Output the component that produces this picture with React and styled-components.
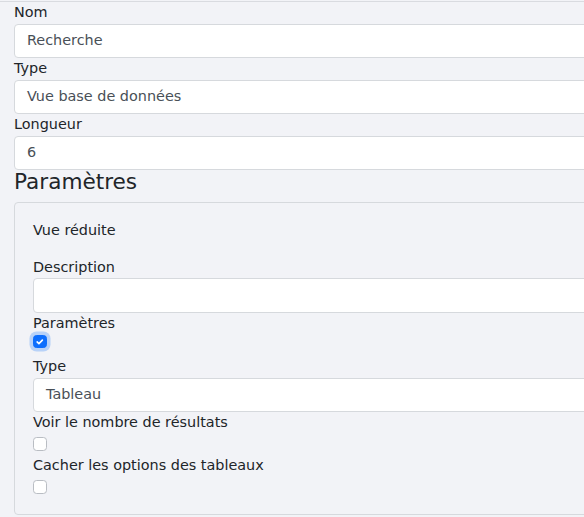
import React from 'react';
import styled, { createGlobalStyle } from 'styled-components';

const GlobalStyle = createGlobalStyle`
  html, body {
    margin: 0;
    padding: 0;
    background: #f2f3f7;
    overflow: hidden;
  }
  body {
    font-family: "DejaVu Sans", "Liberation Sans", sans-serif;
    font-size: 14.4px;
    line-height: 1.5;
    color: #212529;
  }
`;

const Page = styled.div`
  padding-top: 1px;
`;

const Form = styled.div`
  border-top: 1px solid #d9dbe0;
  padding-left: 14px;
  width: 700px;
`;

const Label = styled.div`
  line-height: 21.6px;
  color: #212529;
`;

const Input = styled.div`
  box-sizing: border-box;
  height: 34.4px;
  padding: 0 12px;
  display: flex;
  align-items: center;
  background: #fff;
  border: 1px solid #d6d9dd;
  border-radius: 4px;
  color: #495057;
`;

const Heading = styled.h4`
  margin: 0 0 8.5px;
  font-size: 21.6px;
  font-weight: 400;
  line-height: 1.1;
  color: #212529;
`;

const Panel = styled.div`
  border: 1px solid #d6d9dd;
  border-radius: 4px;
  padding: 16.5px 18px 16px;
`;

const Text = styled.div`
  line-height: 21.6px;
  margin-bottom: 15.5px;
`;

const CheckWrap = styled.div`
  box-sizing: border-box;
  height: 21.6px;
  padding-top: ${(p) => p.$top}px;
`;

const Box = styled.span`
  box-sizing: border-box;
  display: block;
  width: 13.5px;
  height: 13.5px;
  border-radius: 3.6px;
  background: ${(p) => (p.$checked ? '#0d6efd' : '#fff')};
  border: 1px solid ${(p) => (p.$checked ? '#0d6efd' : '#b9bdc3')};
  box-shadow: ${(p) => (p.$checked ? '0 0 0 3.5px rgba(13, 110, 253, 0.25)' : 'none')};
  svg {
    display: block;
  }
`;

const Checkbox = ({ checked, top }) => (
  <CheckWrap $top={top}>
    <Box $checked={checked}>
      {checked && (
        <svg width="11.5" height="11.5" viewBox="0 0 11 11">
          <path d="M3 5.7 L4.7 7.3 L8 4" fill="none" stroke="#fff" strokeWidth="1.6" strokeLinecap="round" strokeLinejoin="round" />
        </svg>
      )}
    </Box>
  </CheckWrap>
);

export default function App() {
  return (
    <Page>
      <GlobalStyle />
      <Form>
        <Label>Nom</Label>
        <Input>Recherche</Input>
        <Label>Type</Label>
        <Input>Vue base de données</Input>
        <Label>Longueur</Label>
        <Input>6</Input>
        <Heading>Paramètres</Heading>
        <Panel>
          <Text>Vue réduite</Text>
          <Label>Description</Label>
          <Input />
          <Label>Paramètres</Label>
          <Checkbox checked top={0.5} />
          <Label>Type</Label>
          <Input>Tableau</Input>
          <Label>Voir le nombre de résultats</Label>
          <Checkbox top={3.5} />
          <Label>Cacher les options des tableaux</Label>
          <Checkbox top={3.5} />
        </Panel>
      </Form>
    </Page>
  );
}
